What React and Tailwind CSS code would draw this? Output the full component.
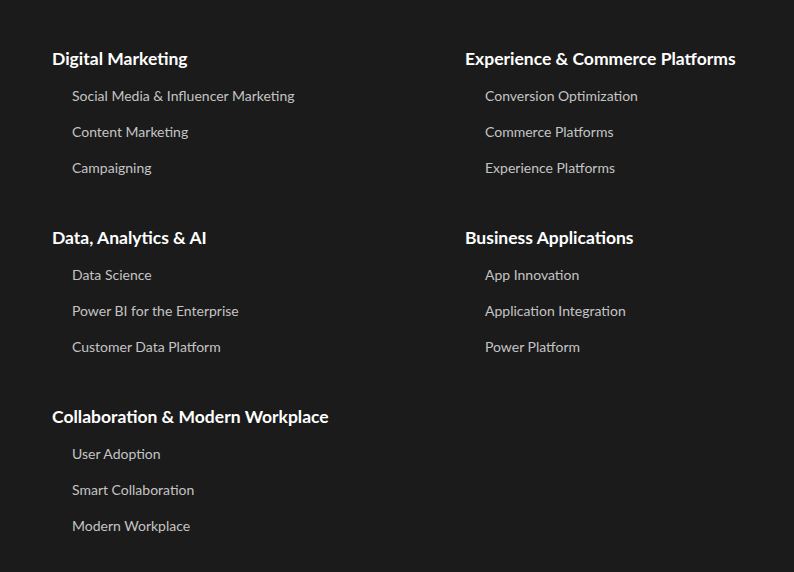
import React from 'react';

const sections = [
  {
    title: 'Digital Marketing',
    items: ['Social Media & Influencer Marketing', 'Content Marketing', 'Campaigning'],
  },
  {
    title: 'Experience & Commerce Platforms',
    items: ['Conversion Optimization', 'Commerce Platforms', 'Experience Platforms'],
  },
  {
    title: 'Data, Analytics & AI',
    items: ['Data Science', 'Power BI for the Enterprise', 'Customer Data Platform'],
  },
  {
    title: 'Business Applications',
    items: ['App Innovation', 'Application Integration', 'Power Platform'],
  },
  {
    title: 'Collaboration & Modern Workplace',
    items: ['User Adoption', 'Smart Collaboration', 'Modern Workplace'],
  },
];

const Section = ({ section }) => (
  <div>
    <h3 className="text-[17.5px] leading-6 font-bold text-white">{section.title}</h3>
    <ul className="mt-[7px] pl-5">
      {section.items.map((item) => (
        <li key={item} className="text-[14px] leading-9 text-[#c4c4c4]">
          {item}
        </li>
      ))}
    </ul>
  </div>
);

export default function App() {
  return (
    <div
      className="min-h-[572px] w-full bg-[#1b1b1b] pl-[52px] pt-[47px]"
      style={{ fontFamily: 'Lato, "Open Sans", sans-serif' }}
    >
      <div className="grid grid-cols-[413px_1fr] gap-y-[40px]">
        {sections.map((s) => (
          <Section key={s.title} section={s} />
        ))}
      </div>
    </div>
  );
}
